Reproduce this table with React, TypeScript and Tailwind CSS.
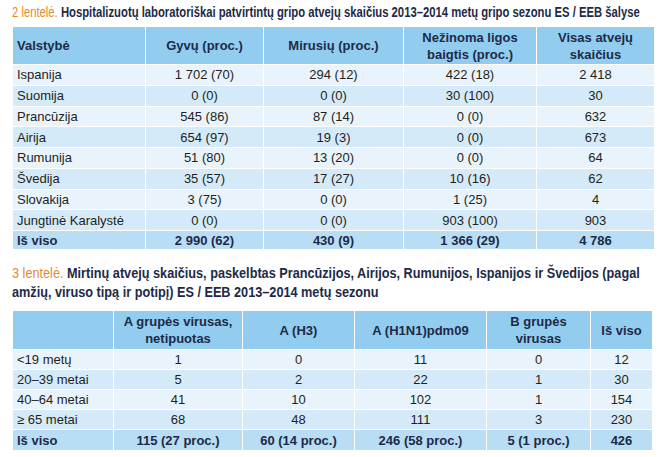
import React, { useLayoutEffect, useRef, useState } from "react"

const hospital = [
  ["Ispanija", "1 702 (70)", "294 (12)", "422 (18)", "2 418"],
  ["Suomija", "0 (0)", "0 (0)", "30 (100)", "30"],
  ["Prancūzija", "545 (86)", "87 (14)", "0 (0)", "632"],
  ["Airija", "654 (97)", "19 (3)", "0 (0)", "673"],
  ["Rumunija", "51 (80)", "13 (20)", "0 (0)", "64"],
  ["Švedija", "35 (57)", "17 (27)", "10 (16)", "62"],
  ["Slovakija", "3 (75)", "0 (0)", "1 (25)", "4"],
  ["Jungtinė Karalystė", "0 (0)", "0 (0)", "903 (100)", "903"],
]

const deaths = [
  ["<19 metų", "1", "0", "11", "0", "12"],
  ["20–39 metai", "5", "2", "22", "1", "30"],
  ["40–64 metai", "41", "10", "102", "1", "154"],
  ["≥ 65 metai", "68", "48", "111", "3", "230"],
]

function rowBg(i: number) {
  return i % 2 === 0 ? "bg-[#e8f3fb]" : "bg-[#d5eaf8]"
}

// squeezes a title line so its first line spans the given width (condensed face look)
function Caption({ label, lines, width }: { label: string; lines: string[]; width: number }) {
  const ref = useRef<HTMLSpanElement>(null)
  const [scale, setScale] = useState(1)

  useLayoutEffect(() => {
    if (ref.current) setScale(width / ref.current.offsetWidth)
  }, [width])

  return (
    <>
      {lines.map((line, i) => (
        <div key={i} className="whitespace-nowrap">
          <span
            ref={i === 0 ? ref : undefined}
            className="inline-block origin-left"
            style={{ transform: `scaleX(${scale})` }}
          >
            {i === 0 && <span className="text-[#e38b2c] font-normal">{label} </span>}
            <span className="font-bold text-[#1d2a47]">{line}</span>
          </span>
        </div>
      ))}
    </>
  )
}

export default function App() {
  return (
    <div className="w-[666px] h-[457px] bg-white text-[#231f20] overflow-hidden font-['Liberation_Sans',Arial,sans-serif]">
      {/* 2 lentelė */}
      <div className="pl-[12px] pt-[3px] h-[26px] text-[14px] leading-[18px]">
        <Caption
          label="2 lentelė."
          width={628}
          lines={["Hospitalizuotų laboratoriškai patvirtintų gripo atvejų skaičius 2013–2014 metų gripo sezonu ES / EEB šalyse"]}
        />
      </div>

      <table className="ml-[12px] w-[642px] border-collapse table-fixed text-[13px] font-['Liberation_Sans',Arial,sans-serif]">
        <colgroup>
          <col className="w-[133px]" />
          <col className="w-[118px]" />
          <col className="w-[140px]" />
          <col className="w-[133px]" />
          <col className="w-[118px]" />
        </colgroup>
        <thead>
          <tr className="bg-[#92cdf0] h-[38px] text-[#1d2a47] leading-[17px]">
            <th className="border border-white text-left pl-[4px] font-bold">Valstybė</th>
            <th className="border border-white font-bold">Gyvų (proc.)</th>
            <th className="border border-white font-bold">Mirusių (proc.)</th>
            <th className="border border-white font-bold">
              Nežinoma ligos
              <br />
              baigtis (proc.)
            </th>
            <th className="border border-white font-bold">
              Visas atvejų
              <br />
              skaičius
            </th>
          </tr>
        </thead>
        <tbody>
          {hospital.map((r, i) => (
            <tr key={r[0]} className={`${rowBg(i)} h-[20.75px] leading-[15px]`}>
              {r.map((c, j) => (
                <td key={j} className={`border border-white ${j === 0 ? "text-left pl-[4px]" : "text-center"}`}>
                  {c}
                </td>
              ))}
            </tr>
          ))}
          <tr className="bg-[#b9ddf4] h-[19px] leading-[15px] font-bold text-[#1d2a47]">
            <td className="border border-white pl-[4px]">Iš viso</td>
            <td className="border border-white text-center">2 990 (62)</td>
            <td className="border border-white text-center">430 (9)</td>
            <td className="border border-white text-center">1 366 (29)</td>
            <td className="border border-white text-center">4 786</td>
          </tr>
        </tbody>
      </table>

      {/* 3 lentelė */}
      <div className="pl-[12px] pt-[14px] h-[60px] text-[14px] leading-[19px]">
        <Caption
          label="3 lentelė."
          width={628}
          lines={[
            "Mirtinų atvejų skaičius, paskelbtas Prancūzijos, Airijos, Rumunijos, Ispanijos ir Švedijos (pagal",
            "amžių, viruso tipą ir potipį) ES / EEB 2013–2014 metų sezonu",
          ]}
        />
      </div>

      <table className="ml-[12px] w-[640px] border-collapse table-fixed text-[13px] font-['Liberation_Sans',Arial,sans-serif]">
        <colgroup>
          <col className="w-[101px]" />
          <col className="w-[129px]" />
          <col className="w-[112px]" />
          <col className="w-[132px]" />
          <col className="w-[104px]" />
          <col className="w-[62px]" />
        </colgroup>
        <thead>
          <tr className="bg-[#92cdf0] h-[39px] text-[#1d2a47] leading-[17px]">
            <th className="border border-white"></th>
            <th className="border border-white font-bold">
              A grupės virusas,
              <br />
              netipuotas
            </th>
            <th className="border border-white font-bold">A (H3)</th>
            <th className="border border-white font-bold">A (H1N1)pdm09</th>
            <th className="border border-white font-bold">
              B grupės
              <br />
              virusas
            </th>
            <th className="border border-white font-bold">Iš viso</th>
          </tr>
        </thead>
        <tbody>
          {deaths.map((r, i) => (
            <tr key={r[0]} className={`${rowBg(i)} h-[20px] leading-[15px]`}>
              {r.map((c, j) => (
                <td key={j} className={`border border-white ${j === 0 ? "text-left pl-[4px]" : "text-center"}`}>
                  {c}
                </td>
              ))}
            </tr>
          ))}
          <tr className="bg-[#b9ddf4] h-[21px] leading-[15px] font-bold text-[#1d2a47]">
            <td className="border border-white pl-[4px]">Iš viso</td>
            <td className="border border-white text-center">115 (27 proc.)</td>
            <td className="border border-white text-center">60 (14 proc.)</td>
            <td className="border border-white text-center">246 (58 proc.)</td>
            <td className="border border-white text-center">5 (1 proc.)</td>
            <td className="border border-white text-center">426</td>
          </tr>
        </tbody>
      </table>
    </div>
  )
}
